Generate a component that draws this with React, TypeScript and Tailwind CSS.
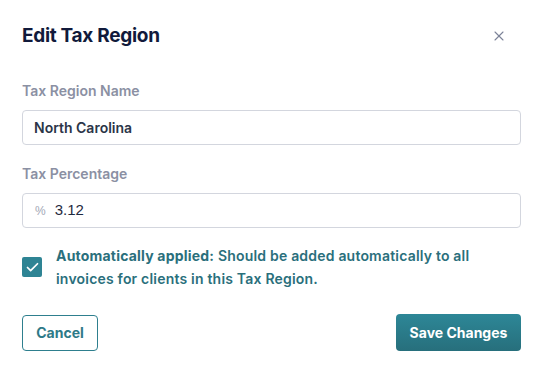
import { X, Check } from "lucide-react";

export default function App() {
  return (
    <div className="w-[543px] h-[365px] bg-white font-['Inter',sans-serif] px-[22px] pt-[23px]">
      {/* Header */}
      <div className="flex items-center justify-between h-[26px]">
        <h2 className="text-[19px] font-bold tracking-[-0.3px] text-[#111a3b]">Edit Tax Region</h2>
        <button className="w-6 h-6 mr-[10px] flex items-center justify-center text-[#7c8298]" aria-label="Close">
          <X className="w-[16px] h-[16px]" strokeWidth={1.6} />
        </button>
      </div>

      {/* Tax Region Name */}
      <label className="block mt-[33px] text-[14px] font-semibold text-[#8b90a3] leading-[18px]">Tax Region Name</label>
      <div className="mt-[10px] h-[35px] rounded-[4px] border border-[#d3d6de] flex items-center px-[11px]">
        <span className="text-[14px] font-semibold text-[#2b3548]">North Carolina</span>
      </div>

      {/* Tax Percentage */}
      <label className="block mt-[20px] text-[14px] font-semibold text-[#8b90a3] leading-[18px]">Tax Percentage</label>
      <div className="mt-[10px] h-[35px] rounded-[4px] border border-[#d3d6de] flex items-center px-[12px] gap-[9px]">
        <span className="text-[12px] text-[#a3a8b6] font-['Liberation_Sans',sans-serif]">%</span>
        <span className="text-[15px] text-[#1f2a40] font-['Liberation_Sans',sans-serif]">3.12</span>
      </div>

      {/* Auto applied */}
      <div className="mt-[16px] flex items-center gap-[14px]">
        <div className="w-[20px] h-[20px] rounded-[2px] bg-[#2e8494] flex items-center justify-center shrink-0">
          <Check className="w-[15px] h-[15px] text-white" strokeWidth={2.8} />
        </div>
        <p className="text-[14px] font-semibold tracking-[0.2px] leading-[23px] text-[#2a6f7c] pr-[36px]">
          <span className="font-bold">Automatically applied:</span> Should be added automatically to all invoices for clients in this Tax Region.
        </p>
      </div>

      {/* Footer */}
      <div className="mt-[24px] flex items-center justify-between">
        <button className="h-[36px] w-[76px] rounded-[4px] border border-[#2e7f8e] text-[#2e7a88] text-[14px] font-bold">
          Cancel
        </button>
        <button className="h-[37px] w-[125px] rounded-[4px] bg-gradient-to-b from-[#2d8797] to-[#276f7c] text-white text-[14px] font-bold">
          Save Changes
        </button>
      </div>
    </div>
  );
}
